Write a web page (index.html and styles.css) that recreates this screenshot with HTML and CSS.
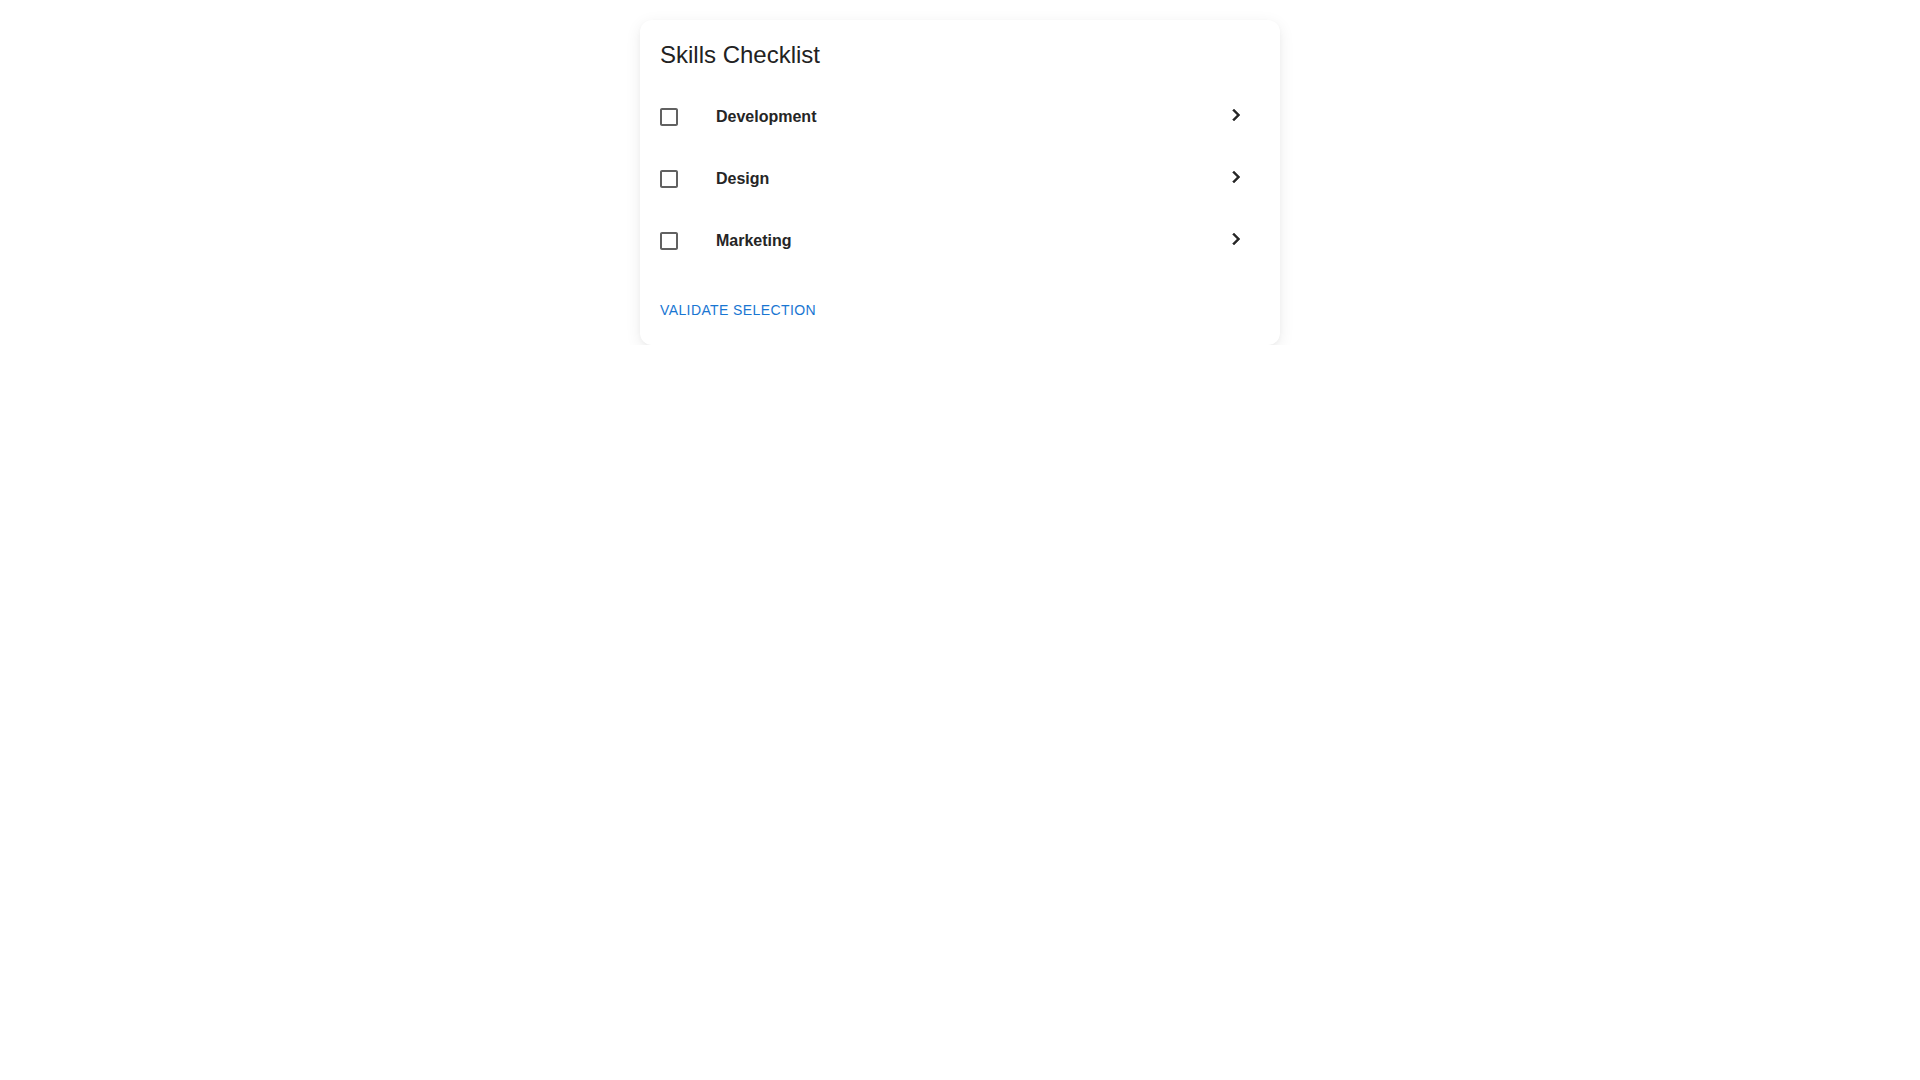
FILE: index.html
```html
<!DOCTYPE html>
<html lang="en">
<head>
<meta charset="utf-8">
<title>Skills Checklist</title>
<link rel="stylesheet" href="styles.css">
</head>
<body>
<div class="page">
  <div class="card">
    <h2 class="title">Skills Checklist</h2>
    <ul class="list">
      <li class="row">
        <span class="check"><svg viewBox="3 3 18 18" width="18" height="18"><path d="M19 5v14H5V5h14m0-2H5c-1.1 0-2 .9-2 2v14c0 1.1.9 2 2 2h14c1.1 0 2-.9 2-2V5c0-1.1-.9-2-2-2z"/></svg></span>
        <span class="label">Development</span>
        <span class="chev"><svg viewBox="0 0 24 24" width="24" height="24"><path d="M10 6 8.59 7.41 13.17 12l-4.58 4.59L10 18l6-6z"/></svg></span>
      </li>
      <li class="row">
        <span class="check"><svg viewBox="3 3 18 18" width="18" height="18"><path d="M19 5v14H5V5h14m0-2H5c-1.1 0-2 .9-2 2v14c0 1.1.9 2 2 2h14c1.1 0 2-.9 2-2V5c0-1.1-.9-2-2-2z"/></svg></span>
        <span class="label">Design</span>
        <span class="chev"><svg viewBox="0 0 24 24" width="24" height="24"><path d="M10 6 8.59 7.41 13.17 12l-4.58 4.59L10 18l6-6z"/></svg></span>
      </li>
      <li class="row">
        <span class="check"><svg viewBox="3 3 18 18" width="18" height="18"><path d="M19 5v14H5V5h14m0-2H5c-1.1 0-2 .9-2 2v14c0 1.1.9 2 2 2h14c1.1 0 2-.9 2-2V5c0-1.1-.9-2-2-2z"/></svg></span>
        <span class="label">Marketing</span>
        <span class="chev"><svg viewBox="0 0 24 24" width="24" height="24"><path d="M10 6 8.59 7.41 13.17 12l-4.58 4.59L10 18l6-6z"/></svg></span>
      </li>
    </ul>
    <div class="actions"><button class="btn" type="button">Validate Selection</button></div>
  </div>
</div>
</body>
</html>
```

FILE: styles.css
```css
* { box-sizing: border-box; }
html, body { margin: 0; padding: 0; background: #ffffff; }
body {
  font-family: "Liberation Sans", Arial, sans-serif;
  color: #212121;
}
.page {
  width: 640px;
  margin: 20px auto 0;
}
.card {
  background: #fff;
  border-radius: 12px;
  box-shadow: 0 4px 16px rgba(0, 0, 0, 0.08), 0 2px 4px rgba(0, 0, 0, 0.03);
  padding: 21px 20px 23px;
}
.title {
  margin: 0;
  font-size: 24px;
  font-weight: 400;
  line-height: 1.2;
  color: #222222;
}
.list {
  list-style: none;
  margin: 16px 0 0;
  padding: 0;
}
.row {
  height: 62px;
  display: flex;
  align-items: center;
}
.check {
  width: 56px;
  flex: 0 0 56px;
  display: flex;
  align-items: center;
}
.check svg { display: block; fill: #616161; }
.label {
  flex: 1;
  font-size: 16px;
  font-weight: 700;
  color: #252525;
}
.chev {
  display: flex;
  margin-right: 12px;
  margin-bottom: 4px;
}
.chev svg { display: block; fill: #262626; stroke: #262626; stroke-width: 0.5; }
.actions {
  margin-top: 26px;
}
.btn {
  border: 0;
  background: none;
  padding: 0;
  font-family: "Liberation Sans", Arial, sans-serif;
  font-size: 14px;
  line-height: 24px;
  letter-spacing: 0.4px;
  text-transform: uppercase;
  color: #1976d2;
  cursor: pointer;
}
```
